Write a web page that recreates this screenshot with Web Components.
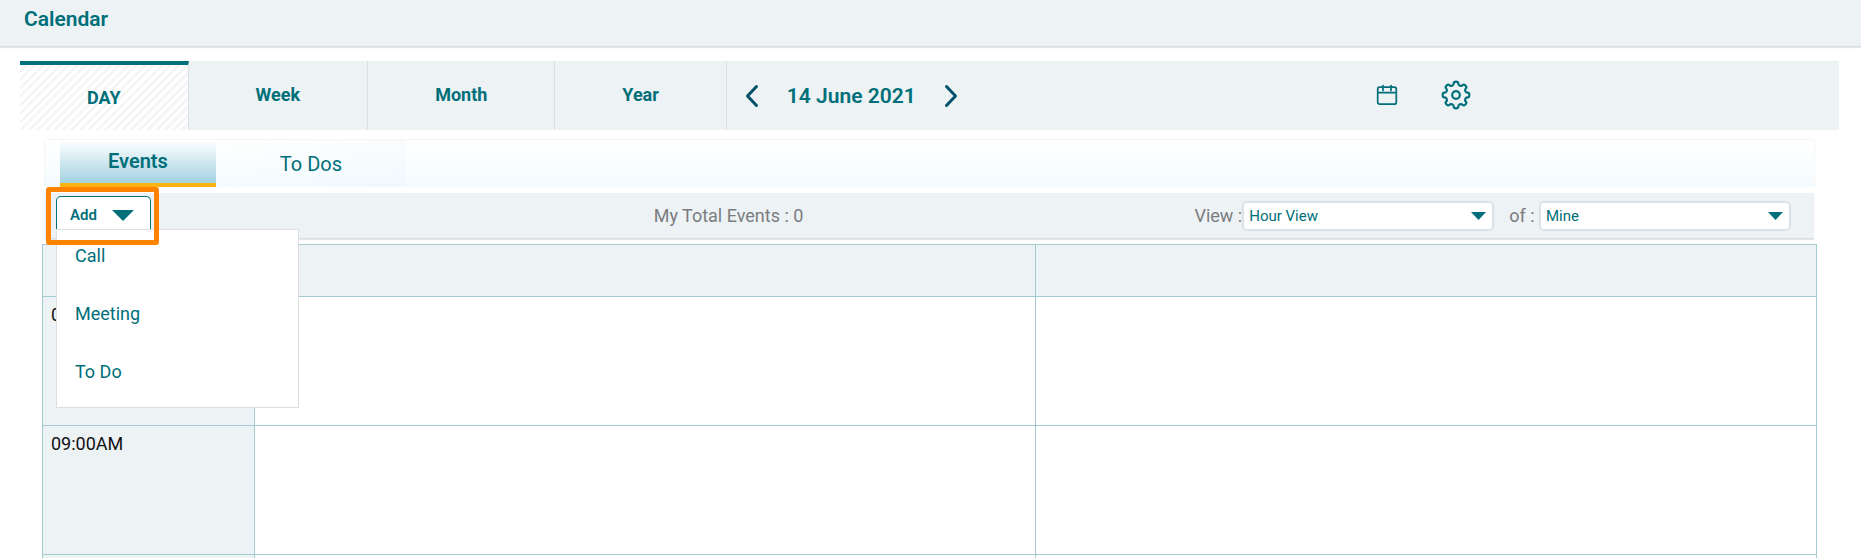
<!DOCTYPE html>
<html lang="en">
<head>
<meta charset="utf-8">
<meta name="viewport" content="width=device-width, initial-scale=1">
<title>Calendar</title>
<style>
  :root {
    --teal: #006f79;
    --panel: #edf2f5;
    --line: #dcdfdf;
    --grid: #a3cbcf;
    --muted: #7b7c80;
  }

  body {
    margin: 0;
    background: #fff;
    color: var(--teal);
    font-family: Roboto, "Liberation Sans", sans-serif;
    font-size: 18px;
    line-height: 24px;
  }
</style>
</head>
<body>
<calendar-page>
  <page-header slot="header">Calendar</page-header>
  <range-nav slot="nav" date="14 June 2021">
    <range-tab active>DAY</range-tab>
    <range-tab>Week</range-tab>
    <range-tab>Month</range-tab>
    <range-tab>Year</range-tab>
  </range-nav>
  <item-tabs></item-tabs>
  <event-toolbar>
    <add-menu slot="add"></add-menu>
    <span>My Total Events : 0</span>
    <select-field slot="filters" label="View :" value="Hour View"></select-field>
    <select-field slot="filters" label="of :&nbsp;" value="Mine"></select-field>
  </event-toolbar>
  <hour-grid hours="08:00AM,09:00AM,"></hour-grid>
</calendar-page>

<script>
class CalendarPage extends HTMLElement {
  connectedCallback() {
    this.attachShadow({ mode: "open" })
    this.shadowRoot.innerHTML = `
      <style>
        :host {
          display: flex;
          flex-direction: column;
          height: 100vh;
          overflow: hidden;
        }

        .nav {
          padding: 14px 22px 0 20px;
        }

        main {
          display: flex;
          flex-direction: column;
          flex: 1;
          min-height: 0;
          padding: 10px 44px 0 42px;
        }
      </style>
      <slot name="header"></slot>
      <div class="nav"><slot name="nav"></slot></div>
      <main><slot></slot></main>
    `
  }
}

class PageHeader extends HTMLElement {
  connectedCallback() {
    this.attachShadow({ mode: "open" })
    this.shadowRoot.innerHTML = `
      <style>
        :host {
          display: block;
          padding: 7px 24px 15px;
          background: var(--panel);
          border-bottom: 1px solid var(--line);
          box-shadow: 0 1px 1px #e6e6e6;
        }

        h1 {
          margin: 0;
          font-size: 21px;
          font-weight: 600;
          line-height: 24px;
        }
      </style>
      <h1><slot></slot></h1>
    `
  }
}

class RangeTab extends HTMLElement {
  connectedCallback() {
    this.attachShadow({ mode: "open" })
    this.shadowRoot.innerHTML = `
      <style>
        :host {
          display: flex;
        }

        button {
          padding: 0 67px 2px;
          border: 0;
          border-right: 1px solid var(--line);
          background: none;
          color: inherit;
          font: 700 18px/24px Roboto, sans-serif;
          cursor: pointer;
        }

        :host([active]) button {
          padding-bottom: 0;
          border-top: 4px solid var(--teal);
          background: repeating-linear-gradient(135deg, #fff 0 3px, #f6f6f6 3px 6px);
        }
      </style>
      <button type="button"><slot></slot></button>
    `
  }
}

class RangeNav extends HTMLElement {
  connectedCallback() {
    this.attachShadow({ mode: "open" })
    this.shadowRoot.innerHTML = `
      <style>
        :host {
          display: flex;
          height: 69px;
          background: var(--panel);
        }

        .date, .tools {
          display: flex;
          align-items: center;
        }

        .date {
          gap: 28px;
          padding-left: 18px;
          font-size: 21px;
          font-weight: 600;
        }

        .tools {
          gap: 43px;
          margin-left: auto;
          padding: 0 19.8vw 2px 0;
        }

        button {
          display: flex;
          padding: 0;
          border: 0;
          background: none;
          color: inherit;
          cursor: pointer;
        }

        .date button {
          color: #00506a;
        }

        svg {
          fill: none;
          stroke: currentColor;
          stroke-linecap: round;
          stroke-linejoin: round;
        }
      </style>
      <slot></slot>
      <div class="date">
        <button type="button" aria-label="Previous day">
          <svg width="14" height="24" viewBox="0 0 14 24" stroke-width="3"><path d="M11.500 2.500 2.500 12l9 9.500"/></svg>
        </button>
        <span>${this.getAttribute("date")}</span>
        <button type="button" aria-label="Next day">
          <svg width="14" height="24" viewBox="0 0 14 24" stroke-width="3"><path d="m2.500 2.500 9 9.500-9 9.500"/></svg>
        </button>
      </div>
      <div class="tools">
        <button type="button" aria-label="Pick a date">
          <svg width="22" height="22" viewBox="0 0 22 22" stroke-width="1.700">
            <rect x="1.700" y="3.200" width="18.600" height="17" rx="2"/>
            <path d="M2 8.700h17M7 1.500v5M15 1.500v5"/>
          </svg>
        </button>
        <button type="button" aria-label="Settings">
          <svg class="gear" width="30" height="30" viewBox="0 0 30 30" stroke-width="2.200"><circle cx="15" cy="15" r="3.800"/><path/></svg>
        </button>
      </div>
    `
    this.shadowRoot.querySelector(".gear path").setAttribute("d", this.gearPath())
  }

  // eight rounded teeth, one per 45 degrees
  gearPath() {
    const at = (deg, r) => {
      const a = (deg * Math.PI) / 180
      return `${(15 + r * Math.cos(a)).toFixed(2)} ${(15 + r * Math.sin(a)).toFixed(2)}`
    }
    let d = `M${at(-11, 12)}`
    for (let t = 0; t < 360; t += 45) {
      d += `C${at(t - 9, 14)} ${at(t + 9, 14)} ${at(t + 11, 12)}`
      d += `C${at(t + 13, 9.6)} ${at(t + 32, 9.6)} ${at(t + 34, 12)}`
    }
    return d + "Z"
  }
}

class ItemTabs extends HTMLElement {
  connectedCallback() {
    this.attachShadow({ mode: "open" })
    this.shadowRoot.innerHTML = `
      <style>
        :host {
          display: flex;
          flex: none;
          height: 47px;
          margin: 0 3px;
          padding-left: 15px;
          box-sizing: border-box;
          background: linear-gradient(#fff, #f4fbff);
          box-shadow: 1px -1px 1px #f6f6f6, -1px 0 1px #f6f6f6;
        }

        button {
          padding: 0 64px;
          border: 0;
          background: linear-gradient(90deg, #0000, #eaf4f944);
          color: inherit;
          font: 400 20px/24px Roboto, sans-serif;
          cursor: pointer;
        }

        .active {
          padding: 0 48px 2px;
          border-bottom: 4px solid #fcb414;
          background: linear-gradient(#fff, #a3d2e1);
          font-weight: 600;
        }
      </style>
      <button type="button" class="active">Events</button>
      <button type="button">To Dos</button>
    `
  }
}

class EventToolbar extends HTMLElement {
  connectedCallback() {
    this.attachShadow({ mode: "open" })
    this.shadowRoot.innerHTML = `
      <style>
        :host {
          display: flex;
          flex: none;
          align-items: center;
          height: 45px;
          margin: 6px 3px 5px;
          padding: 0 23px 0 11px;
          background: var(--panel);
          border-bottom: 1px solid var(--line);
          box-shadow: 0 1px 1px #e6e6e6;
          color: var(--muted);
        }

        .before { flex: 9; }
        .after { flex: 7; }

        .filters {
          display: flex;
          gap: 15px;
        }
      </style>
      <slot name="add"></slot>
      <div class="before"></div>
      <slot></slot>
      <div class="after"></div>
      <div class="filters"><slot name="filters"></slot></div>
    `
  }
}

class AddMenu extends HTMLElement {
  connectedCallback() {
    this.attachShadow({ mode: "open" })
    this.shadowRoot.innerHTML = `
      <style>
        :host {
          display: block;
          position: relative;
          align-self: flex-start;
          padding-top: 3px;
          color: var(--teal);
        }

        .toggle {
          display: flex;
          align-items: center;
          gap: 15px;
          height: 40px;
          padding: 0 16px 3px 13px;
          border: 1px solid var(--teal);
          border-bottom: 0;
          border-radius: 5px 5px 0 0;
          background: #fff;
          color: inherit;
          font: 600 15px/20px Roboto, sans-serif;
          cursor: pointer;
        }

        .toggle svg {
          fill: currentColor;
        }

        ul {
          position: absolute;
          top: 36px;
          left: 0;
          z-index: 1;
          display: flex;
          flex-direction: column;
          gap: 34px;
          width: 243px;
          margin: 0;
          padding: 14px 18px 23px;
          box-sizing: border-box;
          border: 1px solid var(--line);
          background: #fff;
          list-style: none;
        }

        a {
          color: inherit;
          text-decoration: none;
        }

        .highlight {
          position: absolute;
          z-index: 2;
          inset: -6px -8px auto -10px;
          height: 58px;
          box-sizing: border-box;
          border: 5px solid #ff8200;
          border-radius: 3px;
          pointer-events: none;
        }
      </style>
      <button type="button" class="toggle" aria-expanded="true">
        Add
        <svg width="22" height="12" viewBox="0 0 22 12"><path d="M0 1h22L11 12z"/></svg>
      </button>
      <ul>
        <li><a href="#call">Call</a></li>
        <li><a href="#meeting">Meeting</a></li>
        <li><a href="#todo">To Do</a></li>
      </ul>
      <div class="highlight"></div>
    `
  }
}

class SelectField extends HTMLElement {
  connectedCallback() {
    this.attachShadow({ mode: "open" })
    this.shadowRoot.innerHTML = `
      <style>
        :host {
          display: flex;
          align-items: center;
        }

        .box {
          display: grid;
          align-items: center;
          color: var(--teal);
        }

        select, svg {
          grid-area: 1 / 1;
        }

        select {
          width: 252px;
          height: 30px;
          padding: 0 28px 0 5px;
          border: 2px solid #dae4e7;
          border-radius: 5px;
          background: #fff;
          color: inherit;
          font: 400 15px/20px Roboto, sans-serif;
          appearance: none;
        }

        svg {
          justify-self: end;
          margin-right: 8px;
          fill: currentColor;
          pointer-events: none;
        }
      </style>
      <label for="field">${this.getAttribute("label")}</label>
      <div class="box">
        <select id="field"><option>${this.getAttribute("value")}</option></select>
        <svg width="15" height="8" viewBox="0 0 15 8"><path d="M0 0h15L7.500 8z"/></svg>
      </div>
    `
  }
}

class HourGrid extends HTMLElement {
  connectedCallback() {
    const rows = this.getAttribute("hours").split(",")
      .map(hour => `<tr><th scope="row">${hour}</th><td></td><td></td></tr>`)
      .join("")
    this.attachShadow({ mode: "open" })
    this.shadowRoot.innerHTML = `
      <style>
        :host {
          display: block;
          flex: 1;
          min-height: 0;
        }

        table {
          width: 100%;
          table-layout: fixed;
          border-collapse: collapse;
        }

        th, td {
          height: 129px;
          padding: 0;
          box-sizing: border-box;
          border: 1px solid var(--grid);
        }

        thead td {
          height: 52px;
        }

        thead td, th {
          background: var(--panel);
        }

        thead td:first-child {
          width: 212px;
        }

        th {
          padding: 6px 8px;
          color: #111;
          font-weight: 400;
          text-align: left;
          vertical-align: top;
        }
      </style>
      <table>
        <thead><tr><td></td><td></td><td></td></tr></thead>
        <tbody>${rows}</tbody>
      </table>
    `
  }
}

customElements.define("calendar-page", CalendarPage)
customElements.define("page-header", PageHeader)
customElements.define("range-tab", RangeTab)
customElements.define("range-nav", RangeNav)
customElements.define("item-tabs", ItemTabs)
customElements.define("event-toolbar", EventToolbar)
customElements.define("add-menu", AddMenu)
customElements.define("select-field", SelectField)
customElements.define("hour-grid", HourGrid)
</script>
</body>
</html>
